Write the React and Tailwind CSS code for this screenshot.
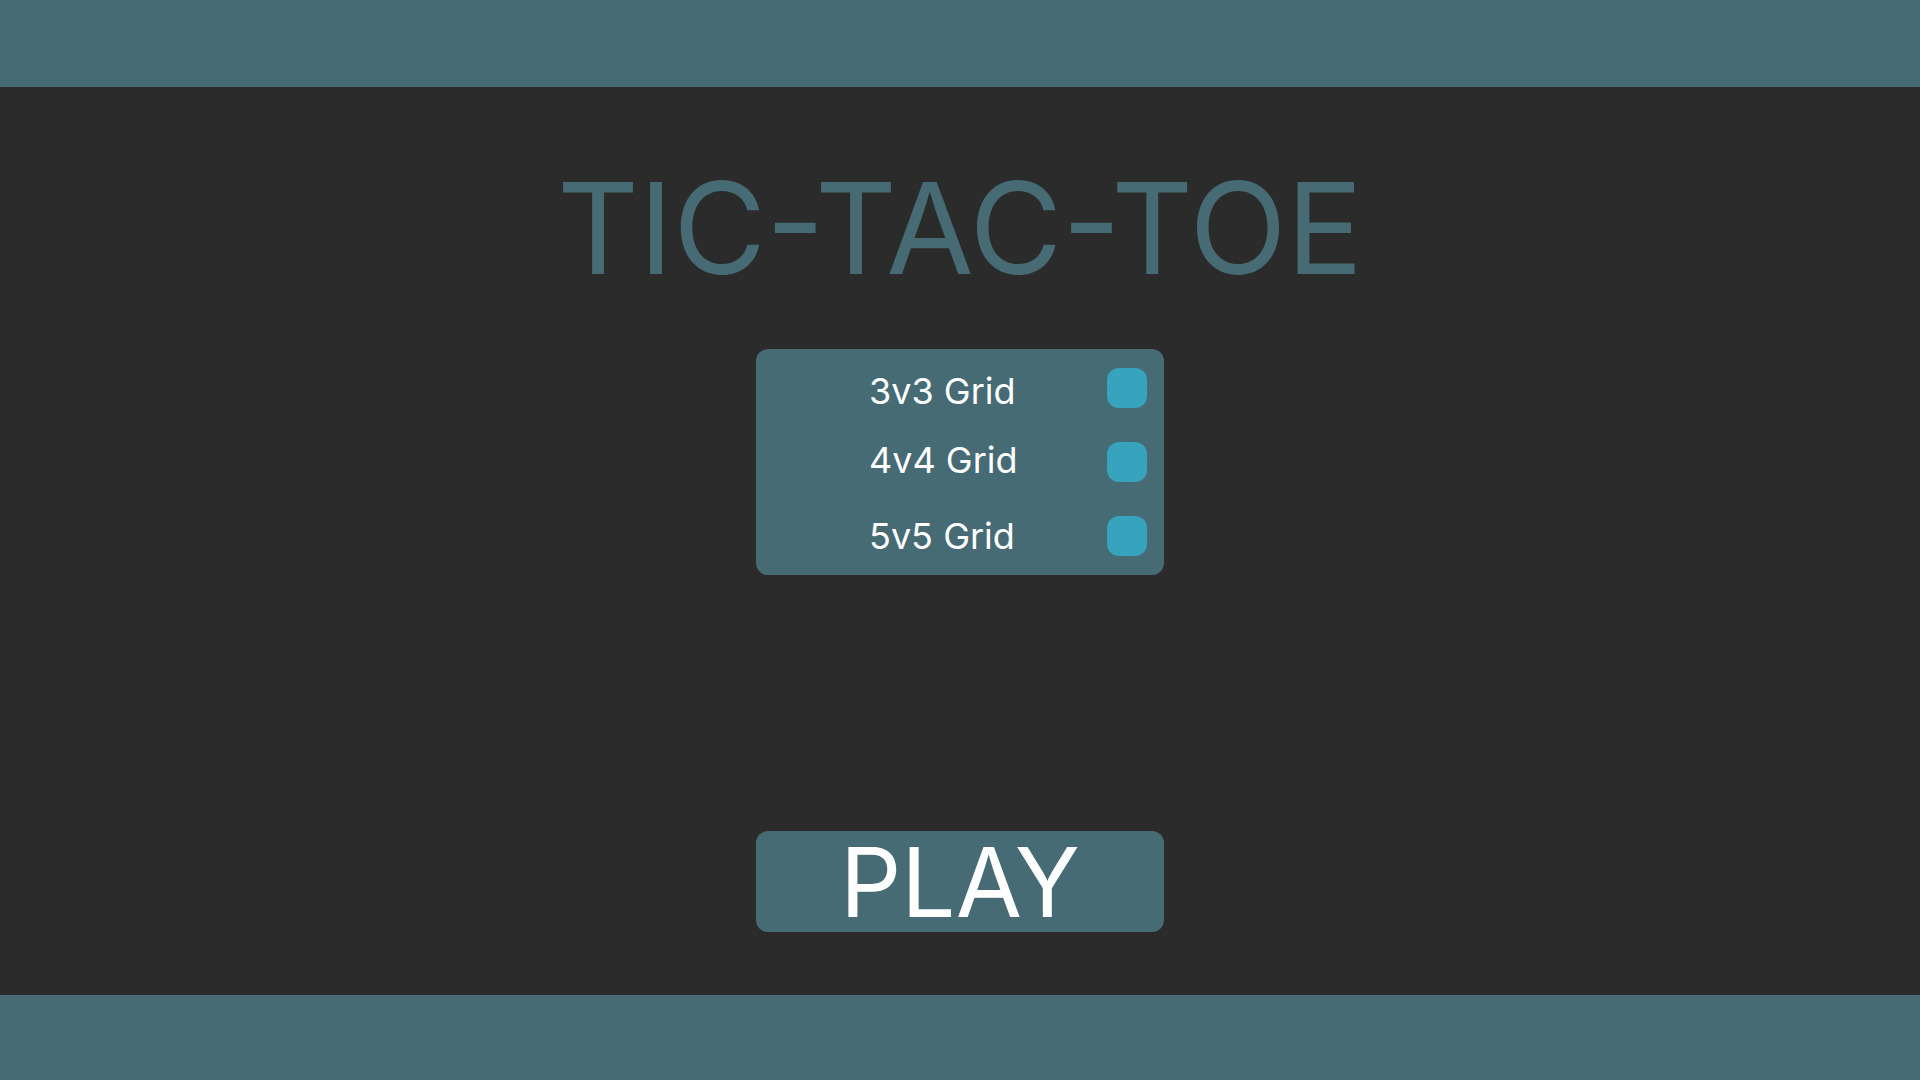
import React, { useState } from 'react';

const GRIDS = [
  { label: '3v3 Grid', shift: 'pt-[6px]' },
  { label: '4v4 Grid', shift: 'pb-[4px]' },
  { label: '5v5 Grid', shift: '' },
];

const App = () => {
  const [selected, setSelected] = useState(null);

  return (
    <div className="h-screen flex flex-col bg-[#2b2b2b] font-['Inter','Liberation_Sans',sans-serif]">
      <header className="h-[87px] bg-[#466b74]" />

      <main className="flex-1 flex flex-col items-center">
        <h1 className="mt-[77px] text-[127px] leading-[128px] font-normal text-[#466b74]">
          TIC-TAC-TOE
        </h1>

        <div className="mt-[57px] w-[408px] rounded-xl bg-[#466b74] pt-[19px] pb-[19px] pl-[113px] pr-[17px] flex flex-col gap-[34px]">
          {GRIDS.map((g, i) => (
            <label key={g.label} className="h-[40px] flex items-center justify-between cursor-pointer">
              <span className={`text-[36px] leading-[40px] text-white ${g.shift}`}>{g.label}</span>
              <input
                type="checkbox"
                className="sr-only"
                checked={selected === i}
                onChange={() => setSelected(selected === i ? null : i)}
              />
              <span className="w-[40px] h-[40px] rounded-xl bg-[#37a3bd]" />
            </label>
          ))}
        </div>

        <button className="mt-[256px] w-[408px] h-[101px] rounded-xl bg-[#466b74] text-white text-[96px] leading-none flex items-center justify-center">
          PLAY
        </button>
      </main>

      <footer className="h-[85px] bg-[#466b74]" />
    </div>
  );
};

export default App;
